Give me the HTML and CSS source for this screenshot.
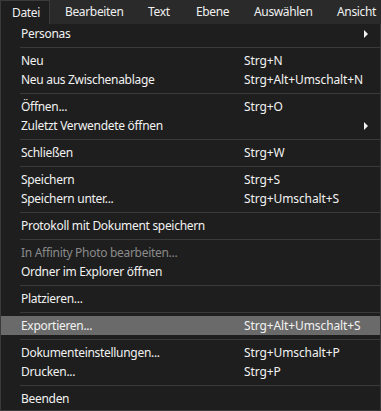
FILE: index.html
```html
<!DOCTYPE html>
<html lang="de">
<head>
    <meta charset="UTF-8">
    <title>Datei-Menü</title>
    <link rel="stylesheet" href="styles.css">
</head>
<body>
    <div class="menubar">
        <div class="menubar-item active">Datei</div>
        <div class="menubar-item w-bearbeiten">Bearbeiten</div>
        <div class="menubar-item w-text">Text</div>
        <div class="menubar-item w-ebene">Ebene</div>
        <div class="menubar-item w-auswaehlen">Auswählen</div>
        <div class="menubar-item">Ansicht</div>
    </div>
    <div class="menu">
        <div class="menu-item"><span class="label">Personas</span><span class="arrow"></span></div>
        <div class="sep"></div>
        <div class="menu-item"><span class="label">Neu</span><span class="key">Strg+N</span></div>
        <div class="menu-item"><span class="label">Neu aus Zwischenablage</span><span class="key">Strg+Alt+Umschalt+N</span></div>
        <div class="sep"></div>
        <div class="menu-item"><span class="label">Öffnen...</span><span class="key">Strg+O</span></div>
        <div class="menu-item"><span class="label">Zuletzt Verwendete öffnen</span><span class="arrow"></span></div>
        <div class="sep"></div>
        <div class="menu-item"><span class="label">Schließen</span><span class="key">Strg+W</span></div>
        <div class="sep"></div>
        <div class="menu-item"><span class="label">Speichern</span><span class="key">Strg+S</span></div>
        <div class="menu-item"><span class="label">Speichern unter...</span><span class="key">Strg+Umschalt+S</span></div>
        <div class="sep"></div>
        <div class="menu-item"><span class="label">Protokoll mit Dokument speichern</span></div>
        <div class="sep"></div>
        <div class="menu-item disabled"><span class="label">In Affinity Photo bearbeiten...</span></div>
        <div class="menu-item"><span class="label">Ordner im Explorer öffnen</span></div>
        <div class="sep"></div>
        <div class="menu-item"><span class="label">Platzieren...</span></div>
        <div class="sep"></div>
        <div class="menu-item selected"><span class="label">Exportieren...</span><span class="key">Strg+Alt+Umschalt+S</span></div>
        <div class="sep"></div>
        <div class="menu-item"><span class="label">Dokumenteinstellungen...</span><span class="key">Strg+Umschalt+P</span></div>
        <div class="menu-item"><span class="label">Drucken...</span><span class="key">Strg+P</span></div>
        <div class="sep"></div>
        <div class="menu-item"><span class="label">Beenden</span></div>
    </div>
</body>
</html>
```

FILE: styles.css
```css
* {
    margin: 0;
    padding: 0;
    box-sizing: border-box;
}

body {
    font-family: "Noto Sans", "Open Sans", sans-serif;
    font-size: 12px;
    color: #f2f2f2;
    background: #1e1e1e;
    width: 381px;
    height: 411px;
    overflow: hidden;
}

.menubar {
    display: flex;
    height: 24px;
    background: #2a2a2a;
    letter-spacing: -0.35px;
}

.menubar-item {
    height: 24px;
    line-height: 24px;
    padding-left: 13px;
    white-space: nowrap;
    color: #f0f0f0;
}

.menubar-item.active {
    width: 50px;
    padding-left: 11px;
    margin-right: 2px;
    background: #1e1e1e;
    border: 1px solid #3a3a3a;
    border-bottom: none;
    line-height: 23px;
}

.w-bearbeiten { width: 83px; }
.w-text { width: 48px; }
.w-ebene { width: 58px; }
.w-auswaehlen { width: 83px; }

.menu {
    height: 387px;
    background: #1e1e1e;
    border: 1px solid #3a3a3a;
    border-top: none;
}

.menu-item {
    display: flex;
    align-items: center;
    height: 19px;
    padding-left: 20px;
}

.menu-item .label {
    width: 223px;
    white-space: nowrap;
    letter-spacing: -0.3px;
}

.menu-item .key {
    flex: 1;
    letter-spacing: -0.1px;
}

.menu-item .arrow {
    margin-left: auto;
    margin-right: 12px;
    width: 0;
    height: 0;
    border-top: 4px solid transparent;
    border-bottom: 4px solid transparent;
    border-left: 4px solid #f2f2f2;
}

.menu-item.disabled {
    color: #8a8a8a;
}

.menu-item.selected {
    background: #6a6a6a;
}

.sep {
    height: 8px;
    margin-left: 19px;
    border-top: 4px solid #1e1e1e;
    border-bottom: 3px solid #1e1e1e;
    background: #3a3a3a;
}
```
